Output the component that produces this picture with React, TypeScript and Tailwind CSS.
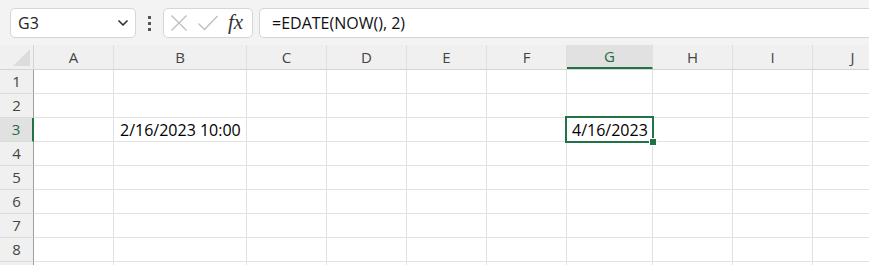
import { ChevronDown } from "lucide-react";

const cols = [
  { name: "A", w: "w-[80px]" },
  { name: "B", w: "w-[133px]" },
  { name: "C", w: "w-[80px]" },
  { name: "D", w: "w-[80px]" },
  { name: "E", w: "w-[80px]" },
  { name: "F", w: "w-[80px]" },
  { name: "G", w: "w-[86px]" },
  { name: "H", w: "w-[80px]" },
  { name: "I", w: "w-[80px]" },
  { name: "J", w: "w-[80px]" },
];

const rows = [1, 2, 3, 4, 5, 6, 7, 8, 9];

const uiFont = { fontFamily: '"Open Sans", "Noto Sans", sans-serif' };

function Toolbar() {
  return (
    <div className="h-[45px] bg-[#f3f3f3] flex items-center pl-[10px] pt-[1px]">
      {/* Name box */}
      <div className="w-[126px] h-[30px] bg-white border border-[#d6d6d6] rounded-[5px] flex items-center justify-between pl-[7px] pr-[4px]">
        <span className="text-[16px] text-[#222]" style={uiFont}>
          G3
        </span>
        <ChevronDown size={16} strokeWidth={2.6} className="text-[#333]" />
      </div>

      {/* three dots */}
      <div className="w-[27px] flex flex-col items-center gap-[3px]">
        <span className="w-[3px] h-[3px] bg-[#555]" />
        <span className="w-[3px] h-[3px] bg-[#555]" />
        <span className="w-[3px] h-[3px] bg-[#555]" />
      </div>

      {/* cancel / enter / fx */}
      <div className="w-[90px] h-[30px] bg-white border border-[#d6d6d6] rounded-[5px] flex items-center pl-[6px] gap-[9px]">
        <svg width="18" height="18" viewBox="0 0 18 18">
          <path d="M1.5 1.5 L16.5 16.5 M16.5 1.5 L1.5 16.5" stroke="#bdbdbd" strokeWidth="1.3" fill="none" />
        </svg>
        <svg width="22" height="18" viewBox="0 0 22 18">
          <path d="M1.5 9.5 L7.5 15.5 L20.5 2" stroke="#bdbdbd" strokeWidth="1.3" fill="none" />
        </svg>
        <span
          className="text-[21px] italic text-[#333] leading-none -mt-[2px]"
          style={{ fontFamily: '"Liberation Serif", serif' }}
        >
          fx
        </span>
      </div>

      {/* formula bar */}
      <div className="ml-[6px] flex-1 h-[30px] bg-white border border-[#d6d6d6] rounded-l-[5px] border-r-0 flex items-center pl-[12px]">
        <span className="text-[16px] text-[#111]" style={uiFont}>
          =EDATE(NOW(), 2)
        </span>
      </div>
    </div>
  );
}

function Sheet() {
  return (
    <div className="bg-white" style={uiFont}>
      {/* header row */}
      <div className="flex h-[25px] bg-[#f0f0f0] border-b border-[#d4d4d4]">
        <div className="w-[34px] shrink-0 border-r border-[#d4d4d4] flex items-end justify-end pr-[3px] pb-[3px]">
          <svg width="17" height="17" viewBox="0 0 17 17">
            <path d="M17 0 L17 17 L0 17 Z" fill="#dcdcdc" />
          </svg>
        </div>
        {cols.map((c) => (
          <div
            key={c.name}
            className={`${c.w} shrink-0 flex items-center justify-center text-[15px] border-r border-[#e0e0e0] ${
              c.name === "G"
                ? "bg-[#e1e1e1] text-[#1e6c41] border-b-2 border-b-[#217346]"
                : "text-[#444]"
            }`}
          >
            {c.name}
          </div>
        ))}
      </div>

      {rows.map((r) => (
        <div key={r} className="flex h-[24px]">
          <div
            className={`w-[34px] shrink-0 flex items-center justify-center text-[15px] border-b border-[#dadada] ${
              r === 3
                ? "bg-[#e1e1e1] text-[#1e6c41] border-r-2 border-r-[#217346]"
                : "bg-[#f0f0f0] text-[#444] border-r border-r-[#9e9e9e]"
            }`}
          >
            {r < 9 ? r : ""}
          </div>
          {cols.map((c) => (
            <div
              key={c.name}
              className={`${c.w} shrink-0 relative border-r border-b border-[#e1e1e1] flex items-center`}
            >
              {r === 3 && c.name === "B" && (
                <span className="pl-[6px] text-[16px] text-black">2/16/2023 10:00</span>
              )}
              {r === 3 && c.name === "G" && (
                <>
                  <span className="pl-[5px] text-[16px] text-black">4/16/2023</span>
                  <div className="absolute z-10 -left-[2px] -top-[2px] right-[-2px] bottom-[-2px] border-2 border-[#217346] pointer-events-none" />
                  <div className="absolute z-20 right-[-5px] bottom-[-5px] w-[8px] h-[8px] bg-[#217346] border border-white" />
                </>
              )}
            </div>
          ))}
        </div>
      ))}
    </div>
  );
}

export default function App() {
  return (
    <div className="w-[869px] h-[265px] overflow-hidden bg-[#f3f3f3]">
      <Toolbar />
      <Sheet />
    </div>
  );
}
